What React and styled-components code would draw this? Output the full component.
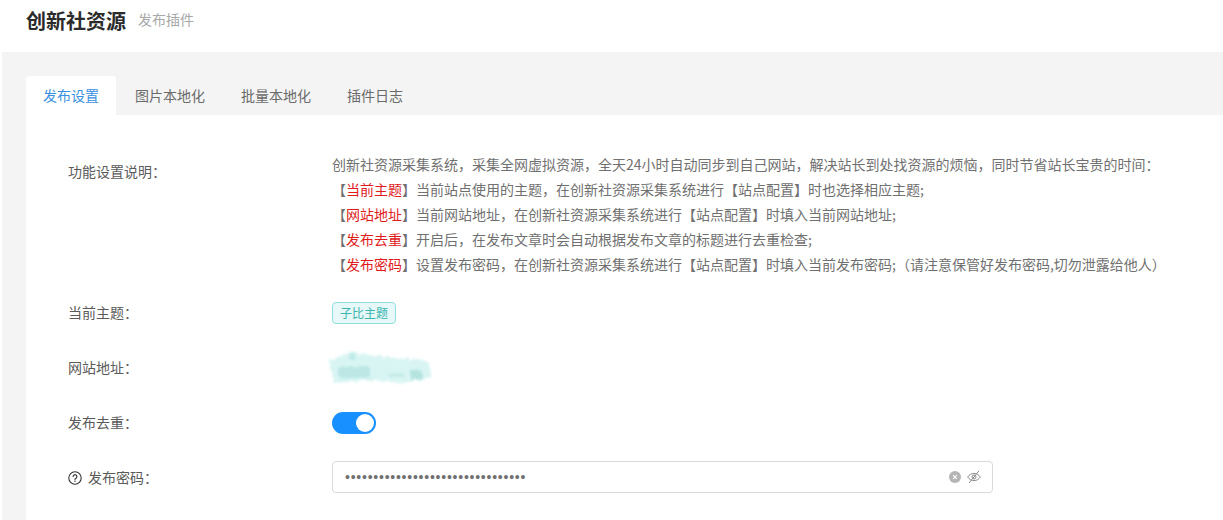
import React from "react";
import styled, { createGlobalStyle } from "styled-components";

const Global = createGlobalStyle`
  html, body { margin: 0; padding: 0; background: #fff; }
  body { font-family: "Noto Sans CJK SC", "Liberation Sans", sans-serif; overflow: hidden; }
`;
const Page = styled.div`width: 1223px; height: 520px; overflow: hidden; background: #fff;`;
const Header = styled.header`height: 52px; display: flex; align-items: baseline; padding: 6px 0 0 26px; box-sizing: border-box; gap: 12px;`;
const Title = styled.h1`margin: 0; font-size: 20px; line-height: 30px; font-weight: 700; color: #2b2b2b;`;
const Sub = styled.span`font-size: 14px; line-height: 22px; color: #a8a8a8; position: relative; top: -4px;`;
const Main = styled.main`margin-left: 2px; height: 468px; background: #f4f4f4; padding: 24px 0 0 24px; box-sizing: border-box;`;
const Tabs = styled.nav`display: flex; height: 39px; gap: 2px;`;
const Tab = styled.div`
  padding: 0 17px 2px;
  display: flex; align-items: center; justify-content: center;
  font-size: 14px; color: ${p => p.$active ? "#3a90e0" : "#6a6a6a"};
  background: ${p => p.$active ? "#fff" : "transparent"};
  border-radius: 4px 4px 0 0;
`;
const Card = styled.section`background: #fff; height: 405px; padding-top: 40px; box-sizing: border-box;`;
const Row = styled.div`display: grid; grid-template-columns: 306px 1fr; height: ${p => p.$h}px; align-items: ${p => p.$top ? "start" : "center"};`;
const Label = styled.div`padding-left: 42px; font-size: 14px; line-height: 25px; color: #5a5a5a; display: flex; align-items: center; gap: 6px;`;
const TopLabel = styled(Label)`margin-top: 4px;`;
const Help = styled.div`font-size: 14px; line-height: 25px; color: #707070; white-space: nowrap; margin-top: -3px;`;
const Red = styled.span`color: #e01b1b;`;
const Tag = styled.span`display: block; width: 64px; height: 22px; box-sizing: border-box; border: 1px solid #8fe0dc; background: #e6f8f7; border-radius: 4px; color: #3cb5af; font-size: 12px; line-height: 20px; text-align: center;`;
const Toggle = styled.div`width: 44px; height: 22px; border-radius: 11px; background: #1890ff; position: relative;`;
const Knob = styled.span`position: absolute; right: 2px; top: 2px; width: 18px; height: 18px; border-radius: 50%; background: #fff;`;
const Input = styled.div`width: 661px; height: 32px; margin-bottom: 1px; box-sizing: border-box; border: 1px solid #d9d9d9; border-radius: 4px; display: flex; align-items: center; padding: 0 11px 0 12px;`;
const Dots = styled.span`flex: 1; font-family: "Liberation Sans", sans-serif; font-size: 14px; color: #707070; letter-spacing: 0.76px;`;
const Icons = styled.span`display: flex; align-items: center; gap: 6px;`;
const Smudge = styled.svg`display: block; margin-left: -6px; width: 108px; height: 44px;`;

const HelpIcon = () => (
  <svg width="14" height="14" viewBox="0 0 14 14" fill="none" stroke="#333" strokeWidth="1.1">
    <circle cx="7" cy="7" r="6.2" />
    <path d="M5.1 5.6a1.9 1.9 0 1 1 2.9 1.6c-.7.4-1 .7-1 1.4" strokeLinecap="round" />
    <circle cx="7" cy="10.3" r=".7" fill="#333" stroke="none" />
  </svg>
);
const ClearIcon = () => (
  <svg width="12" height="12" viewBox="0 0 12 12">
    <circle cx="6" cy="6" r="6" fill="#b5b5b5" />
    <path d="M4.2 4.2l3.6 3.6M7.8 4.2L4.2 7.8" stroke="#fff" strokeWidth="1.1" />
  </svg>
);
const EyeOffIcon = () => (
  <svg width="14" height="14" viewBox="0 0 14 14" fill="none" stroke="#8c8c8c" strokeWidth="1">
    <path d="M.7 7C2.3 4.6 4.5 3.4 7 3.4s4.7 1.2 6.3 3.6c-1.6 2.4-3.8 3.6-6.3 3.6S2.3 9.4.7 7z" />
    <circle cx="7" cy="7" r="2" />
    <path d="M12 .8L2 13" />
  </svg>
);

export default function App() {
  return (
    <Page>
      <Global />
      <Header>
        <Title>创新社资源</Title>
        <Sub>发布插件</Sub>
      </Header>
      <Main>
        <Tabs>
          <Tab $active>发布设置</Tab>
          <Tab>图片本地化</Tab>
          <Tab>批量本地化</Tab>
          <Tab>插件日志</Tab>
        </Tabs>
        <Card>
          <Row $h={130} $top>
            <TopLabel>功能设置说明：</TopLabel>
            <Help>
              创新社资源采集系统，采集全网虚拟资源，全天24小时自动同步到自己网站，解决站长到处找资源的烦恼，同时节省站长宝贵的时间：<br />
              【<Red>当前主题</Red>】当前站点使用的主题，在创新社资源采集系统进行【站点配置】时也选择相应主题;<br />
              【<Red>网站地址</Red>】当前网站地址，在创新社资源采集系统进行【站点配置】时填入当前网站地址;<br />
              【<Red>发布去重</Red>】开启后，在发布文章时会自动根据发布文章的标题进行去重检查;<br />
              【<Red>发布密码</Red>】设置发布密码，在创新社资源采集系统进行【站点配置】时填入当前发布密码;（请注意保管好发布密码,切勿泄露给他人）
            </Help>
          </Row>
          <Row $h={55}>
            <Label>当前主题：</Label>
            <div><Tag>子比主题</Tag></div>
          </Row>
          <Row $h={55}>
            <Label>网站地址：</Label>
            <Smudge viewBox="0 0 108 44">
              <defs>
                <filter id="b" x="-20%" y="-40%" width="140%" height="180%">
                  <feTurbulence type="fractalNoise" baseFrequency="0.25" numOctaves="2" seed="4" result="n" />
                  <feDisplacementMap in="SourceGraphic" in2="n" scale="7" />
                  <feGaussianBlur stdDeviation="1.3" />
                </filter>
                <filter id="c" x="-30%" y="-60%" width="160%" height="220%">
                  <feTurbulence type="fractalNoise" baseFrequency="0.4" numOctaves="2" seed="9" result="n" />
                  <feDisplacementMap in="SourceGraphic" in2="n" scale="5" />
                  <feGaussianBlur stdDeviation="0.9" />
                </filter>
              </defs>
              <path d="M3 14 L28 7 L52 10 L102 15 L106 31 L78 37 L40 34 L8 38 Z" fill="#d8f5f3" filter="url(#b)" />
              <path d="M22 8 L28 6 L29 14 L24 14Z" fill="#bdebe8" filter="url(#c)" />
              <path d="M12 21 H44 V32 H12Z" fill="#bce7e5" filter="url(#c)" />
              <path d="M62 27 H78 V31 H62Z" fill="#c6ebe9" filter="url(#c)" />
              <path d="M84 24 H96 V33 H84Z" fill="#b5e3e0" filter="url(#c)" />
            </Smudge>
          </Row>
          <Row $h={55}>
            <Label>发布去重：</Label>
            <Toggle><Knob /></Toggle>
          </Row>
          <Row $h={55}>
            <Label><HelpIcon />发布密码：</Label>
            <Input>
              <Dots>••••••••••••••••••••••••••••••••</Dots>
              <Icons><ClearIcon /><EyeOffIcon /></Icons>
            </Input>
          </Row>
        </Card>
      </Main>
    </Page>
  );
}
